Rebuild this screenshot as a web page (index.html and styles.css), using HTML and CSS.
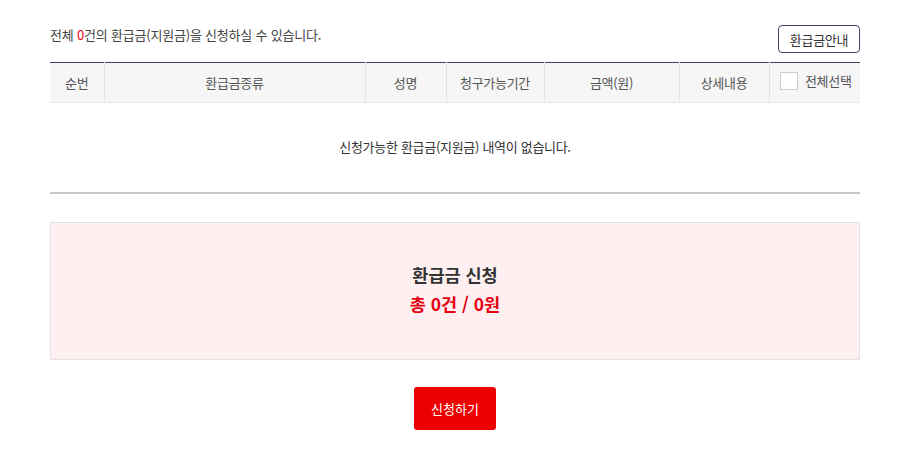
FILE: index.html
```html
<!DOCTYPE html>
<html lang="ko">
<head>
<meta charset="utf-8">
<link rel="stylesheet" href="styles.css">
</head>
<body>
<div class="wrap">
  <div class="top">
    <p class="count">전체 <span class="red">0</span>건의 환급금(지원금)을 신청하실 수 있습니다.</p>
    <button class="guide">환급금안내</button>
  </div>
  <table class="list">
    <colgroup>
      <col class="c1"><col class="c2"><col class="c3"><col class="c4"><col class="c5"><col class="c6"><col class="c7">
    </colgroup>
    <thead>
      <tr>
        <th>순번</th>
        <th>환급금종류</th>
        <th>성명</th>
        <th>청구가능기간</th>
        <th>금액(원)</th>
        <th>상세내용</th>
        <th><label class="all"><span class="chk"></span>전체선택</label></th>
      </tr>
    </thead>
    <tbody>
      <tr><td colspan="7" class="empty">신청가능한 환급금(지원금) 내역이 없습니다.</td></tr>
    </tbody>
  </table>
  <div class="summary">
    <div class="sum-title">환급금 신청</div>
    <div class="sum-total">총 0건 / 0원</div>
  </div>
  <div class="actions">
    <button class="apply">신청하기</button>
  </div>
</div>
</body>
</html>
```
FILE: styles.css
```css
* { box-sizing: border-box; }
body {
  margin: 0;
  font-family: "Noto Sans CJK KR", "Noto Sans", sans-serif;
  color: #333;
  background: #fff;
}
.wrap {
  width: 810px;
  margin: 0 0 0 50px;
  padding-top: 25px;
}
.top {
  display: flex;
  justify-content: space-between;
  align-items: flex-start;
  height: 37px;
}
.count {
  margin: 0;
  font-size: 13px;
  line-height: 20px;
  color: #444;
  letter-spacing: -0.2px;
}
.red { color: #e60012; }
.guide {
  width: 82px;
  height: 28px;
  border: 1px solid #3f4468;
  border-radius: 4px;
  background: #fff;
  font-family: inherit;
  font-size: 13px;
  color: #333;
  padding: 0;
  letter-spacing: -0.3px;
}
.list {
  width: 810px;
  border-collapse: collapse;
  table-layout: fixed;
  border-top: 1px solid #3f4060;
}
.c1 { width: 54px; }
.c2 { width: 261px; }
.c3 { width: 81px; }
.c4 { width: 98px; }
.c5 { width: 135px; }
.c6 { width: 90px; }
.c7 { width: 91px; }
.list th {
  height: 40px;
  background: #f6f6f6;
  font-weight: 400;
  font-size: 13px;
  color: #555;
  border-left: 1px solid #e4e4e4;
  border-bottom: 1px solid #e6e6e6;
  padding: 0;
  letter-spacing: -0.3px;
}
.list th:first-child { border-left: 0; }
.all {
  display: inline-flex;
  align-items: center;
  gap: 7px;
  margin-left: 2px;
}
.chk {
  width: 18px;
  height: 18px;
  border: 1px solid #ccc;
  background: #fff;
}
.empty {
  height: 90px;
  text-align: center;
  font-size: 13px;
  color: #333;
  border-bottom: 2px solid #c8c8cc;
  padding: 0 0 2px;
  letter-spacing: -0.3px;
}
.summary {
  margin-top: 28px;
  height: 138px;
  background: #fef0f0;
  border: 1px solid #e4e2e2;
  display: flex;
  flex-direction: column;
  align-items: center;
  justify-content: center;
  gap: 4px;
  padding-bottom: 4px;
}
.sum-title {
  font-size: 17.5px;
  font-weight: 700;
  color: #333;
  line-height: 25px;
}
.sum-total {
  font-size: 17.5px;
  font-weight: 700;
  color: #e60012;
  line-height: 25px;
}
.actions {
  display: flex;
  justify-content: center;
  margin-top: 27px;
}
.apply {
  width: 82px;
  height: 43px;
  background: #ee0000;
  color: #fff;
  border: 0;
  border-radius: 3px;
  font-family: inherit;
  font-size: 13px;
  padding: 0;
}
```
